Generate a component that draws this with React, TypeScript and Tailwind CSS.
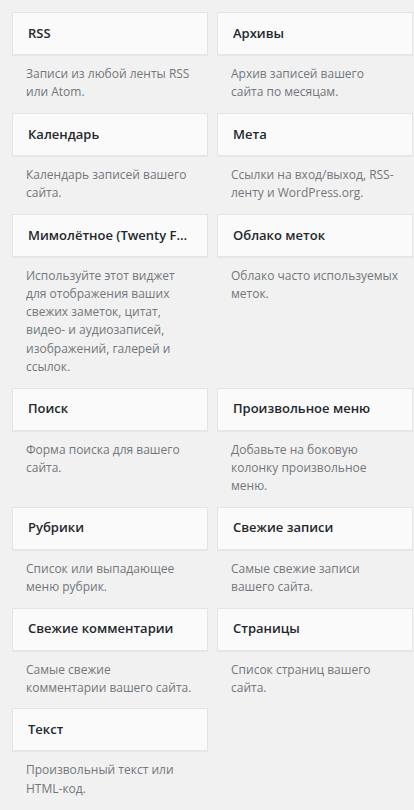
import React from "react";

const widgets: { title: string; desc: string }[] = [
  { title: "RSS", desc: "Записи из любой ленты RSS или Atom." },
  { title: "Архивы", desc: "Архив записей вашего сайта по месяцам." },
  { title: "Календарь", desc: "Календарь записей вашего сайта." },
  { title: "Мета", desc: "Ссылки на вход/выход, RSS-ленту и WordPress.org." },
  { title: "Мимолётное (Twenty Fourteen)", desc: "Используйте этот виджет для отображения ваших свежих заметок, цитат, видео- и аудиозаписей, изображений, галерей и ссылок." },
  { title: "Облако меток", desc: "Облако часто используемых меток." },
  { title: "Поиск", desc: "Форма поиска для вашего сайта." },
  { title: "Произвольное меню", desc: "Добавьте на боковую колонку произвольное меню." },
  { title: "Рубрики", desc: "Список или выпадающее меню рубрик." },
  { title: "Свежие записи", desc: "Самые свежие записи вашего сайта." },
  { title: "Свежие комментарии", desc: "Самые свежие комментарии вашего сайта." },
  { title: "Страницы", desc: "Список страниц вашего сайта." },
  { title: "Текст", desc: "Произвольный текст или HTML-код." },
];

export default function App() {
  return (
    <div
      className="min-h-[810px] w-[414px] bg-[#f1f1f1] pt-[12px] pl-[12px] pr-[1px]"
      style={{ fontFamily: '"Open Sans", "Noto Sans", sans-serif' }}
    >
      <div className="grid grid-cols-2 gap-x-[9px] items-start">
        {widgets.map((w) => (
          <div key={w.title} className="min-w-0">
            <div className="h-[43px] flex items-center border border-[#e5e5e5] bg-[#fafafa] pl-[15px] pr-[14px] shadow-[0_1px_1px_rgba(0,0,0,0.04)]">
              <span className="truncate text-[13px] font-semibold text-[#23282d]">{w.title}</span>
            </div>
            <p className="px-[14px] pt-[10px] pb-[11.5px] text-[12px] leading-[18.2px] text-[#72777c]">{w.desc}</p>
          </div>
        ))}
      </div>
    </div>
  );
}
